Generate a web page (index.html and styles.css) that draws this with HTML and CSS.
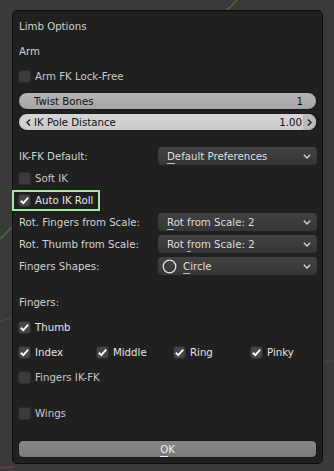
FILE: index.html
```html
<!DOCTYPE html>
<html>
<head>
<meta charset="utf-8">
<link rel="stylesheet" href="styles.css">
</head>
<body>
<svg class="backdrop" width="334" height="471" viewBox="0 0 334 471">
  <line x1="241" y1="-4" x2="0" y2="239" stroke="#4f7d33" stroke-width="1.2"/>
  <line x1="0" y1="321" x2="12" y2="318" stroke="#4a4a4a" stroke-width="1"/>
  <line x1="323" y1="362" x2="334" y2="361" stroke="#4a4a4a" stroke-width="1"/>
  <line x1="0" y1="468" x2="14" y2="467" stroke="#7a3545" stroke-width="1.5"/>
</svg>
<div class="panel">
  <div class="row text title">Limb Options</div>
  <div class="row text mt7">Arm</div>
  <div class="row check mt7"><span class="box"></span><span class="clabel dim">Arm FK Lock-Free</span></div>

  <div class="slider twist mt7"><span class="s-label">Twist Bones</span><span class="s-val">1</span></div>
  <div class="slider pole mt3">
    <span class="arr arr-l"><svg width="5" height="7" viewBox="0 0 5 7"><polyline points="4,0.5 1,3.5 4,6.5" fill="none" stroke="#222" stroke-width="1.4"/></svg></span>
    <span class="s-label">IK Pole Distance</span><span class="s-val">1.00</span>
    <span class="arr arr-r"><svg width="5" height="7" viewBox="0 0 5 7"><polyline points="1,0.5 4,3.5 1,6.5" fill="none" stroke="#222" stroke-width="1.4"/></svg></span>
  </div>

  <div class="row prop mt16"><span class="plabel">IK-FK Default:</span>
    <div class="dropdown"><span class="dtext"><u>D</u>efault Preferences</span><svg class="chev" width="8" height="5" viewBox="0 0 8 5"><polyline points="0.8,0.8 4,4 7.2,0.8" fill="none" stroke="#d0d0d0" stroke-width="1.4"/></svg></div>
  </div>
  <div class="row check mt4"><span class="box"></span><span class="clabel dim">Soft IK</span></div>
  <div class="row check mt4 highlight"><span class="box on"><svg width="13" height="13" viewBox="0 0 13 13"><polyline points="2.8,6.8 5.3,9.2 10.2,3.6" fill="none" stroke="#fff" stroke-width="1.9"/></svg></span><span class="clabel">Auto IK Roll</span></div>
  <div class="row prop mt4"><span class="plabel">Rot. Fingers from Scale:</span>
    <div class="dropdown"><span class="dtext"><u>R</u>ot from Scale: 2</span><svg class="chev" width="8" height="5" viewBox="0 0 8 5"><polyline points="0.8,0.8 4,4 7.2,0.8" fill="none" stroke="#d0d0d0" stroke-width="1.4"/></svg></div>
  </div>
  <div class="row prop mt4"><span class="plabel">Rot. Thumb from Scale:</span>
    <div class="dropdown"><span class="dtext">Rot <u>f</u>rom Scale: 2</span><svg class="chev" width="8" height="5" viewBox="0 0 8 5"><polyline points="0.8,0.8 4,4 7.2,0.8" fill="none" stroke="#d0d0d0" stroke-width="1.4"/></svg></div>
  </div>
  <div class="row prop mt4"><span class="plabel">Fingers Shapes:</span>
    <div class="dropdown icon"><svg class="circ" width="15" height="15" viewBox="0 0 15 15"><circle cx="7.5" cy="7.5" r="6.3" fill="none" stroke="#e0e0e0" stroke-width="1.3"/></svg><span class="dtext"><u>C</u>ircle</span><svg class="chev" width="8" height="5" viewBox="0 0 8 5"><polyline points="0.8,0.8 4,4 7.2,0.8" fill="none" stroke="#d0d0d0" stroke-width="1.4"/></svg></div>
  </div>

  <div class="row text mt18">Fingers:</div>
  <div class="row check mt7"><span class="box on"><svg width="13" height="13" viewBox="0 0 13 13"><polyline points="2.8,6.8 5.3,9.2 10.2,3.6" fill="none" stroke="#fff" stroke-width="1.9"/></svg></span><span class="clabel">Thumb</span></div>
  <div class="row fingers mt7">
    <div class="check"><span class="box on"><svg width="13" height="13" viewBox="0 0 13 13"><polyline points="2.8,6.8 5.3,9.2 10.2,3.6" fill="none" stroke="#fff" stroke-width="1.9"/></svg></span><span class="clabel">Index</span></div>
    <div class="check"><span class="box on"><svg width="13" height="13" viewBox="0 0 13 13"><polyline points="2.8,6.8 5.3,9.2 10.2,3.6" fill="none" stroke="#fff" stroke-width="1.9"/></svg></span><span class="clabel">Middle</span></div>
    <div class="check"><span class="box on"><svg width="13" height="13" viewBox="0 0 13 13"><polyline points="2.8,6.8 5.3,9.2 10.2,3.6" fill="none" stroke="#fff" stroke-width="1.9"/></svg></span><span class="clabel">Ring</span></div>
    <div class="check"><span class="box on"><svg width="13" height="13" viewBox="0 0 13 13"><polyline points="2.8,6.8 5.3,9.2 10.2,3.6" fill="none" stroke="#fff" stroke-width="1.9"/></svg></span><span class="clabel">Pinky</span></div>
  </div>
  <div class="row check mt7"><span class="box"></span><span class="clabel dim">Fingers IK-FK</span></div>

  <div class="row check mt18"><span class="box"></span><span class="clabel dim">Wings</span></div>

  <div class="okbtn mt18"><span><u>O</u>K</span></div>
</div>
</body>
</html>
```

FILE: styles.css
```css
html, body {
  margin: 0;
  padding: 0;
}
body {
  width: 334px;
  height: 471px;
  background: #3a3a3a;
  font-family: "DejaVu Sans", "Liberation Sans", sans-serif;
  font-size: 10.2px;
  color: #d8d8d8;
  overflow: hidden;
  position: relative;
}
.backdrop {
  position: absolute;
  left: 0;
  top: 0;
}
.panel {
  position: relative;
  margin: 10px 0 0 12px;
  width: 311px;
  height: 454px;
  box-sizing: border-box;
  border: 1px solid #0e0e0e;
  border-radius: 5px;
  background: rgba(31, 31, 31, 0.95);
  padding: 6px 5px 0 5px;
  display: flex;
  flex-direction: column;
}
.mt3 { margin-top: 3px; }
.mt4 { margin-top: 4px; }
.mt7 { margin-top: 7px; }
.mt16 { margin-top: 16px; }
.mt18 { margin-top: 18px; }

.row {
  height: 18px;
  display: flex;
  align-items: center;
}
.text {
  padding-left: 1px;
  color: #d2d2d2;
}
.check {
  display: flex;
  align-items: center;
  height: 18px;
}
.box {
  width: 13px;
  height: 13px;
  border-radius: 3px;
  background: #3b3b3b;
  box-sizing: border-box;
  border: 1px solid #2c2c2c;
  flex: none;
  display: flex;
}
.box.on {
  background: #454545;
}
.box svg {
  margin: -1px;
}
.clabel {
  margin-left: 4px;
  color: #e6e6e6;
}
.clabel.dim {
  color: #c8c8c8;
}
.highlight {
  position: relative;
}
.highlight::before {
  content: "";
  position: absolute;
  left: -6px;
  top: -1px;
  width: 88px;
  height: 21px;
  box-sizing: border-box;
  border: 2px solid #a6e8a0;
}

.slider {
  height: 18px;
  border-radius: 9px;
  display: flex;
  align-items: center;
  color: #111;
  box-sizing: border-box;
  border: 1px solid #1a1a1a;
  overflow: hidden;
}
.twist {
  background: linear-gradient(#b4b4b4, #a6a6a6);
  padding: 0 13px 0 15px;
}
.pole {
  background: linear-gradient(#d6d6d6, #cbcbcb);
  padding: 0;
}
.s-label {
  flex: 1;
}
.arr {
  width: 13px;
  height: 100%;
  display: flex;
  align-items: center;
  justify-content: center;
  flex: none;
}
.arr-l {
  width: 15px;
  justify-content: flex-end;
  padding-right: 3px;
  box-sizing: border-box;
}
.arr-r {
  background: #bababa;
  margin-left: 1px;
}

.prop {
  display: grid;
  grid-template-columns: 140px 1fr;
  align-items: center;
}
.plabel {
  padding-left: 1px;
  color: #d2d2d2;
  white-space: nowrap;
}
.dropdown {
  height: 18px;
  border-radius: 4px;
  background: linear-gradient(#424242, #363636);
  display: flex;
  align-items: center;
  padding: 0 6px 0 9px;
  box-sizing: border-box;
  color: #dedede;
}
.dropdown.icon {
  padding-left: 4px;
}
.dtext {
  flex: 1;
  white-space: nowrap;
}
.dtext u {
  text-decoration: underline;
  text-underline-offset: 3px;
  text-decoration-color: #bbb;
}
.circ {
  margin-right: 6px;
  flex: none;
}
.chev {
  flex: none;
}

.fingers {
  display: grid;
  grid-template-columns: 78px 77px 77px 1fr;
}

.okbtn {
  height: 18px;
  border-radius: 5px;
  background: linear-gradient(#888888, #7b7b7b);
  border: 1px solid #1a1a1a;
  box-sizing: border-box;
  display: flex;
  align-items: center;
  justify-content: center;
  color: #f0f0f0;
}
.okbtn u {
  text-underline-offset: 3px;
}
```
